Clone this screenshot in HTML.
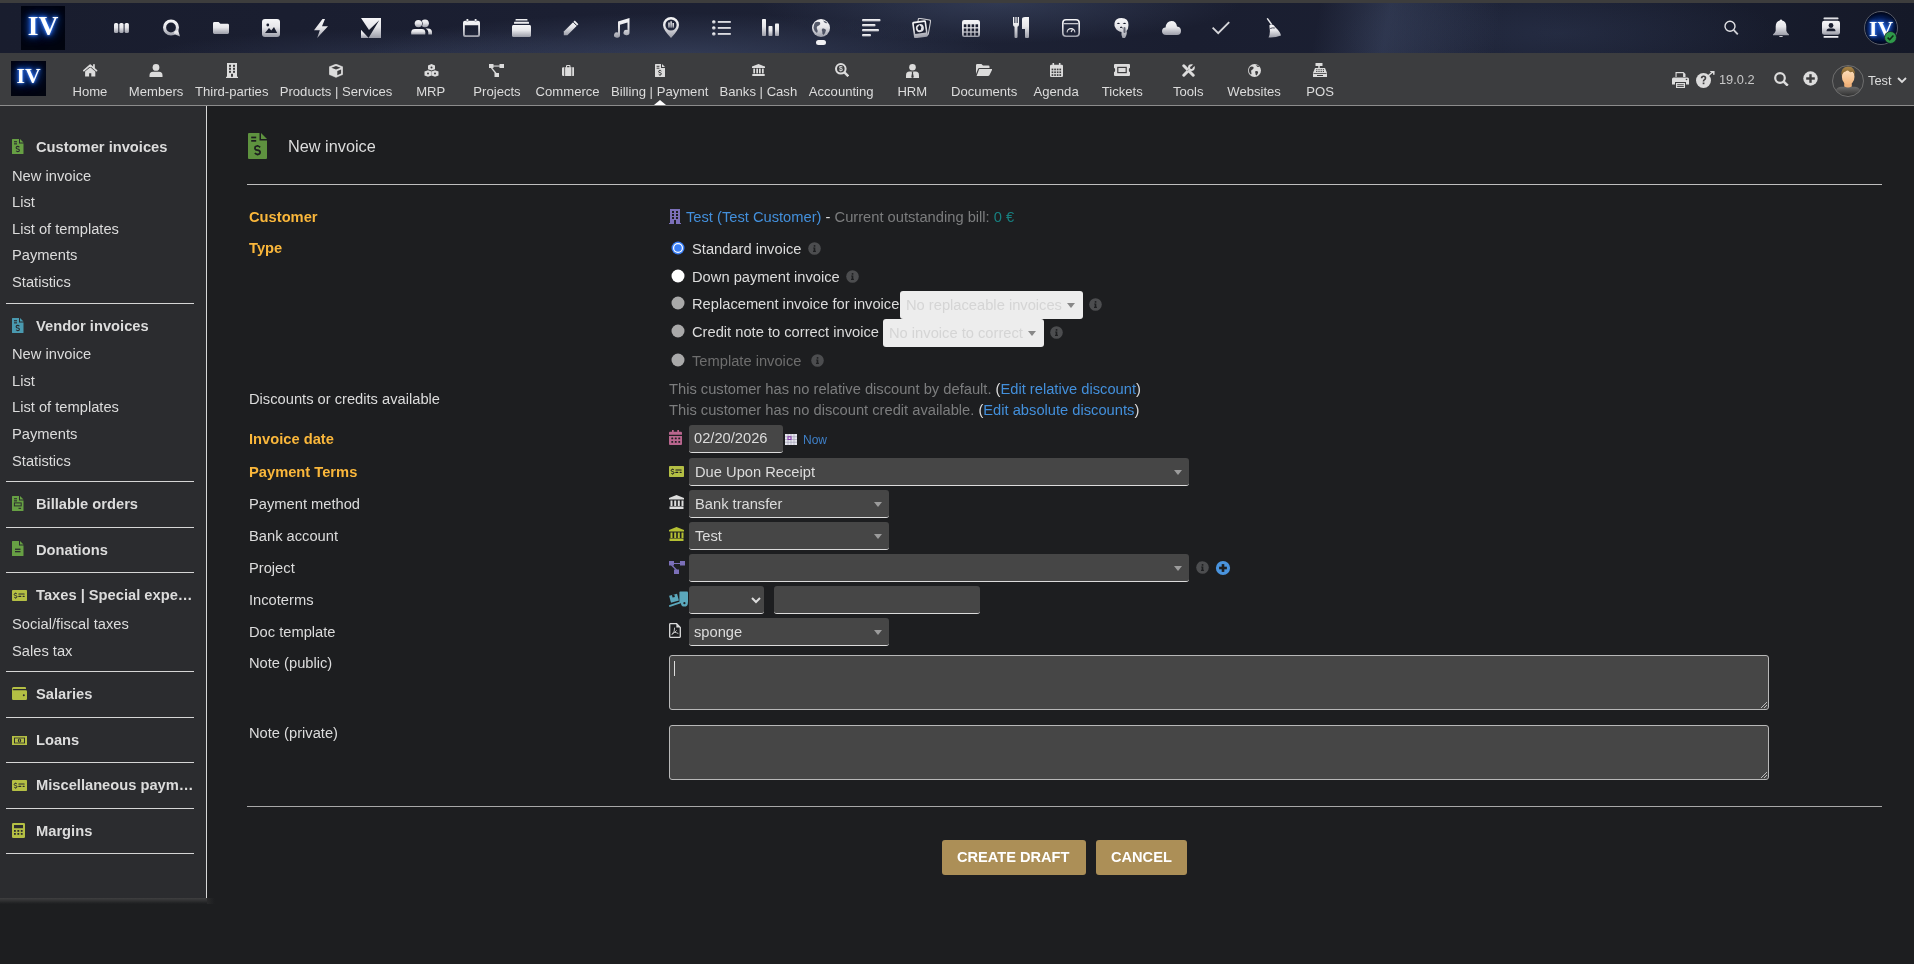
<!DOCTYPE html>
<html><head><meta charset="utf-8">
<style>
*{box-sizing:border-box;margin:0;padding:0}
html,body{width:1914px;height:964px;overflow:hidden}
body{background:#1d1e20;font-family:"Liberation Sans",sans-serif;color:#dcdcdc;font-size:14.7px;position:relative}
.a{position:absolute;white-space:nowrap}
#root{position:absolute;left:0;top:0;width:1914px;height:964px;will-change:transform}
#topbar{left:0;top:3px;width:1914px;height:50px;background:
radial-gradient(ellipse 320px 44px at 680px 54px, rgba(85,100,135,.42), rgba(85,100,135,0)),
radial-gradient(ellipse 260px 30px at 400px 56px, rgba(85,100,135,.25), rgba(85,100,135,0)),
radial-gradient(ellipse 240px 40px at 1000px 0px, rgba(85,100,135,.36), rgba(85,100,135,0)),
linear-gradient(100deg, rgba(0,0,0,0) 1300px, rgba(85,100,135,.32) 1370px, rgba(85,100,135,.18) 1420px, rgba(0,0,0,0) 1480px),
radial-gradient(ellipse 220px 50px at 1560px 30px, rgba(70,85,120,.22), rgba(70,85,120,0)),
linear-gradient(90deg, #191d2e 0, #1b1f32 30%, #1d2235 50%, #1a1e30 62%, #1b2033 80%, #151928 100%)}
</style></head><body>
<div id="root"><div class="a" style="left:0px;top:0px;width:1914px;height:3px;background:#3d3d3d"></div>
<div class="a" id="topbar"></div>
<div class="a" style="left:0px;top:53px;width:1914px;height:52px;background:#3c3d3f"></div>
<div class="a" style="left:0px;top:105px;width:1914px;height:1px;background:#8c8c8c"></div>
<div class="a" style="left:0px;top:106px;width:207px;height:792px;background:#2b2c2f"></div>
<div class="a" style="left:0px;top:898px;width:207px;height:6px;background:linear-gradient(rgba(78,78,78,.7),rgba(29,30,32,0))"></div>
<div class="a" style="left:207px;top:898px;width:8px;height:6px;background:linear-gradient(90deg,rgba(60,60,60,.4),rgba(29,30,32,0))"></div>
<div class="a" style="left:206px;top:106px;width:1px;height:792px;background:#d8d8d8"></div>
<svg class="a" width="0" height="0" style="left:0;top:0"><defs><linearGradient id="tg" x1="0" y1="0" x2="0" y2="1"><stop offset="0" stop-color="#f6f6f8"/><stop offset=".45" stop-color="#e6e6ea"/><stop offset="1" stop-color="#9b9da8"/></linearGradient><radialGradient id="glow" cx=".5" cy=".45" r=".5"><stop offset="0" stop-color="#1d5fd8"/><stop offset=".55" stop-color="#0b2a78"/><stop offset="1" stop-color="#020511"/></radialGradient></defs></svg>
<div class="a" style="left:21px;top:6px;width:44px;height:44px;background:#02050f;overflow:hidden"><div style="position:absolute;left:0;top:6px;width:44px;text-align:center;font-family:'Liberation Serif',serif;font-weight:bold;font-size:27.5px;line-height:27.5px;color:#fff;text-shadow:0 0 2px #4a90ff,0 0 4px #2f70f0,0 0 7px #2060e0,0 0 11px #1850c0,0 0 16px #0c3090">IV</div></div>
<svg class="a" style="left:114px;top:23px;" width="15" height="10" viewBox="0 0 15 10"><rect x="0" y="0" width="4.3" height="10" rx="1.6" fill="url(#tg)"/><rect x="5.3" y="0" width="4.3" height="10" rx="1.6" fill="url(#tg)"/><rect x="10.6" y="0" width="4.3" height="10" rx="1.6" fill="url(#tg)"/></svg>
<svg class="a" style="left:162px;top:19px;" width="19" height="18" viewBox="0 0 19 18"><path fill-rule="evenodd" d="M9 0.5A8 8 0 1 1 9 16.5A8 8 0 1 1 9 0.5ZM9 3.6A4.9 4.9 0 1 0 9 13.4A4.9 4.9 0 1 0 9 3.6Z" fill="url(#tg)"/><path d="M12.5 12.5L16 11L18 17.5L12 15Z" fill="url(#tg)"/></svg>
<svg class="a" style="left:213px;top:22px;" width="16" height="12" viewBox="0 0 16 12"><path d="M0 1.4Q0 0 1.4 0H5.6L7.4 1.8H14.6Q16 1.8 16 3.2V10.6Q16 12 14.6 12H1.4Q0 12 0 10.6Z" fill="url(#tg)"/></svg>
<svg class="a" style="left:262px;top:19px;" width="18" height="18" viewBox="0 0 18 18"><rect x="0" y="0" width="18" height="18" rx="3" fill="url(#tg)"/><circle cx="5.8" cy="6" r="1.4" fill="#191d2e"/><path d="M3 14L7 9L9.3 11.5L12 8L15.2 14Z" fill="#191d2e"/></svg>
<svg class="a" style="left:313px;top:19px;" width="16" height="19" viewBox="0 0 16 19"><path d="M9.5 0L1 11.2H6.8L4.2 19L15 7.2H9L12 0Z" fill="url(#tg)"/></svg>
<svg class="a" style="left:361px;top:18px;" width="20" height="20" viewBox="0 0 20 20"><path d="M0 0H20V20H0Z" fill="url(#tg)"/><path d="M0 0L8 12L18.2 2.2L7.5 20L0 12Z" fill="#191d2e"/><path d="M0 12L7.5 20H0Z" fill="url(#tg)"/></svg>
<svg class="a" style="left:411px;top:19px;" width="21" height="16" viewBox="0 0 21 16"><circle cx="14" cy="4.3" r="3.9" fill="url(#tg)"/><path d="M14.5 9.4H17Q21 9.4 21 13.3V15.6H17.3V13Q17.3 10.6 14.5 9.4Z" fill="url(#tg)"/><circle cx="7.4" cy="4.6" r="4.3" fill="#191d2e"/><circle cx="7.4" cy="4.6" r="3.7" fill="url(#tg)"/><path d="M0 15.6V13.3Q0 9.4 4 9.4H10.8Q14.8 9.4 14.8 13.3V15.6Z" fill="#191d2e"/><path d="M0.2 15.6V13.3Q0.2 9.9 4 9.9H10.8Q14.3 9.9 14.3 13.3V15.6Z" fill="url(#tg)"/></svg>
<svg class="a" style="left:463px;top:19px;" width="17" height="18" viewBox="0 0 17 18"><path fill-rule="evenodd" d="M2 1.8H15Q17 1.8 17 3.8V16Q17 18 15 18H2Q0 18 0 16V3.8Q0 1.8 2 1.8ZM1.8 6.2V15.2Q1.8 16.2 2.8 16.2H14.2Q15.2 16.2 15.2 15.2V6.2Z" fill="url(#tg)"/><rect x="3.5" y="0" width="1.8" height="3" fill="url(#tg)"/><rect x="11.7" y="0" width="1.8" height="3" fill="url(#tg)"/></svg>
<svg class="a" style="left:512px;top:19px;" width="19" height="18" viewBox="0 0 19 18"><rect x="3.5" y="0" width="12" height="1.8" rx=".6" fill="url(#tg)"/><rect x="2" y="2.8" width="15" height="2.2" rx=".6" fill="url(#tg)"/><path d="M1.2 6H17.8Q19 6 19 7.6V16.4Q19 18 17.4 18H1.6Q0 18 0 16.4V7.6Q0 6 1.2 6Z" fill="url(#tg)"/></svg>
<svg class="a" style="left:563px;top:20px;" width="16" height="16" viewBox="0 0 16 16"><path d="M11.8 0.6L15.4 4.2L4.4 15.2H0.8V11.6Z" fill="url(#tg)"/><path d="M10.3 2.1L13.9 5.7" stroke="#191d2e" stroke-width="1"/></svg>
<svg class="a" style="left:613px;top:18px;" width="17" height="20" viewBox="0 0 17 20"><path d="M5 3.5L16.5 0V14.5A3 2.6 0 1 1 14.5 12.1V4.6L7 6.8V17A3 2.6 0 1 1 5 14.6Z" fill="url(#tg)"/></svg>
<svg class="a" style="left:663px;top:17px;" width="16" height="21" viewBox="0 0 16 21"><path fill-rule="evenodd" d="M8 0A8 8 0 0 1 16 8Q16 12.6 8 21Q0 12.6 0 8A8 8 0 0 1 8 0ZM8 2.4A5.6 5.6 0 1 0 8 13.6A5.6 5.6 0 1 0 8 2.4Z" fill="url(#tg)"/><rect x="5.3" y="5.5" width="1.4" height="5.2" fill="url(#tg)"/><rect x="7.4" y="4.3" width="1.4" height="6.4" fill="url(#tg)"/><rect x="9.5" y="6" width="1.4" height="4.7" fill="url(#tg)"/></svg>
<svg class="a" style="left:712px;top:20px;" width="19" height="16" viewBox="0 0 19 16"><circle cx="1.8" cy="2" r="1.8" fill="url(#tg)"/><circle cx="1.8" cy="8" r="1.8" fill="url(#tg)"/><circle cx="1.8" cy="14" r="1.8" fill="url(#tg)"/><rect x="5.8" y="1.1" width="13" height="1.9" fill="url(#tg)"/><rect x="5.8" y="7.1" width="13" height="1.9" fill="url(#tg)"/><rect x="5.8" y="13.1" width="13" height="1.9" fill="url(#tg)"/></svg>
<svg class="a" style="left:762px;top:19px;" width="17" height="17" viewBox="0 0 17 17"><rect x="0" y="0" width="4" height="17" rx=".8" fill="url(#tg)"/><rect x="6.5" y="7" width="4" height="10" rx=".8" fill="url(#tg)"/><rect x="13" y="4.5" width="4" height="12.5" rx=".8" fill="url(#tg)"/></svg>
<svg class="a" style="left:812px;top:19px;" width="18" height="18" viewBox="0 0 18 18"><circle cx="9" cy="9" r="9" fill="url(#tg)"/><path d="M3 3.5Q6 2 8 3.2Q9 5 7 6.5Q4 7 5 10Q6.5 12 5 14Q2 12 1.5 9Q1.8 5.5 3 3.5ZM10.5 9.5Q13 9 14 11Q13.5 14 11.5 16Q10 15 10.3 12.8Q9 11 10.5 9.5ZM11 1.5Q14 2 15.5 4Q13.5 4.5 12.5 3.5Z" fill="#3a3f52" opacity=".85"/></svg>
<div class="a" style="left:816px;top:40px;width:10px;height:5px;background:#f2f2f4;border-radius:2.5px"></div>
<svg class="a" style="left:862px;top:19px;" width="19" height="18" viewBox="0 0 19 18"><rect x="0" y="0" width="18.5" height="2.6" rx="1" fill="url(#tg)"/><rect x="0" y="5" width="13.5" height="2.6" rx="1" fill="url(#tg)"/><rect x="0" y="10" width="17" height="2.6" rx="1" fill="url(#tg)"/><rect x="0" y="15" width="9" height="2.6" rx="1" fill="url(#tg)"/></svg>
<svg class="a" style="left:912px;top:18px;" width="19" height="20" viewBox="0 0 19 20"><g transform="rotate(10 11 9)"><rect x="4.5" y="0.5" width="13.5" height="16" rx="1.5" fill="#c8c8ce"/><rect x="5.6" y="1.6" width="11.3" height="13.8" rx="1" fill="#191d2e"/></g><g transform="rotate(-8 8 11)"><rect x="1" y="3" width="14" height="16.5" rx="1.5" fill="url(#tg)"/><rect x="2.6" y="4.8" width="10.8" height="10.6" fill="#191d2e"/><circle cx="8" cy="10.1" r="4" fill="#e4e4e8"/><path d="M8 6.9L9.6 9.3L8.6 12.2L6.2 12L5.6 9.3Z" fill="#191d2e"/></g></svg>
<svg class="a" style="left:962px;top:20px;" width="18" height="17" viewBox="0 0 18 17"><rect x="0" y="0" width="18" height="17" rx="2.2" fill="url(#tg)"/><rect x="1.8" y="4.3" width="2.6" height="2.9" fill="#191d2e"/><rect x="1.8" y="8.5" width="2.6" height="2.9" fill="#191d2e"/><rect x="1.8" y="12.7" width="2.6" height="2.9" fill="#191d2e"/><rect x="5.7" y="4.3" width="2.6" height="2.9" fill="#191d2e"/><rect x="5.7" y="8.5" width="2.6" height="2.9" fill="#191d2e"/><rect x="5.7" y="12.7" width="2.6" height="2.9" fill="#191d2e"/><rect x="9.6" y="4.3" width="2.6" height="2.9" fill="#191d2e"/><rect x="9.6" y="8.5" width="2.6" height="2.9" fill="#191d2e"/><rect x="9.6" y="12.7" width="2.6" height="2.9" fill="#191d2e"/><rect x="13.5" y="4.3" width="2.6" height="2.9" fill="#191d2e"/><rect x="13.5" y="8.5" width="2.6" height="2.9" fill="#191d2e"/><rect x="13.5" y="12.7" width="2.6" height="2.9" fill="#191d2e"/></svg>
<svg class="a" style="left:1013px;top:17px;" width="16" height="21" viewBox="0 0 16 21"><path d="M0 0H1.3V6H2.4V0H3.6V6H4.7V0H6V7.5Q6 9.5 4.5 9.8V20Q4.5 21 3.5 21H2.5Q1.5 21 1.5 20V9.8Q0 9.5 0 7.5Z" fill="url(#tg)"/><path d="M9 12V2Q9 0 12 0H16V20Q16 21 15 21H13Q12 21 12 20V12Z" fill="url(#tg)"/></svg>
<svg class="a" style="left:1062px;top:19px;" width="18" height="18" viewBox="0 0 18 18"><path fill-rule="evenodd" d="M4 0H14Q18 0 18 4V14Q18 18 14 18H4Q0 18 0 14V4Q0 0 4 0ZM4 1.6Q1.6 1.6 1.6 4V14Q1.6 16.4 4 16.4H14Q16.4 16.4 16.4 14V4Q16.4 1.6 14 1.6Z" fill="url(#tg)"/><rect x="1.6" y="4.2" width="14.8" height="1.2" fill="url(#tg)"/><path d="M4.5 13.5A4.5 4.5 0 0 1 13.5 13.5H12.2A3.2 3.2 0 0 0 5.8 13.5Z" fill="url(#tg)"/><path d="M9 13L10.6 10.4" stroke="#e6e6ea" stroke-width="1.2"/></svg>
<svg class="a" style="left:1114px;top:18px;" width="15" height="20" viewBox="0 0 15 20"><path d="M7.5 0Q14.5 0 14.5 7Q14.5 11 12.5 13Q13.5 16 11 20H8.5Q7 17 7.5 14Q3 13 1.5 10Q0 7.5 0.5 5Q1.5 0 7.5 0Z" fill="url(#tg)"/><path d="M2.8 5.2Q4.5 4 6.2 5.6Q4.5 6.7 2.8 5.2ZM8.6 5.6Q10.5 4 12.2 5.2Q10.5 6.7 8.6 5.6Z" fill="#191d2e"/><path d="M6 9.5Q7.5 8.5 8.5 10" stroke="#191d2e" stroke-width="1"/><rect x="9.5" y="9" width="2" height="6" rx="1" fill="#191d2e" opacity=".6"/></svg>
<svg class="a" style="left:1162px;top:21px;" width="19" height="14" viewBox="0 0 19 14"><path d="M4.2 14Q0 14 0 10.3Q0 6.8 3.6 6.5Q4.2 0 9.5 0Q14.4 0 15 5.6Q19 6 19 10Q19 14 15 14Z" fill="url(#tg)"/></svg>
<svg class="a" style="left:1212px;top:21px;" width="18" height="14" viewBox="0 0 18 14"><path d="M0.6 6.6L6.2 12.2L17.2 1.2" fill="none" stroke="#d6d6da" stroke-width="1.9"/></svg>
<svg class="a" style="left:1266px;top:18px;" width="15" height="20" viewBox="0 0 15 20"><path d="M1.2 0.3L5.6 6.5" stroke="#e8e8ec" stroke-width="1.4"/><path d="M3.4 7.2Q6 5.5 8 7.5L9.3 9.2Q14.5 14 15 17.5Q9 20 2.5 19.5Q4.5 16 3.6 10Z" fill="url(#tg)"/><path d="M4.2 10.5Q6.5 9.5 8.8 10" stroke="#191d2e" stroke-width=".8" fill="none"/></svg>
<svg class="a" style="left:1723px;top:20px;" width="16" height="16" viewBox="0 0 16 16"><circle cx="7" cy="6.3" r="5" fill="none" stroke="#e0e0e4" stroke-width="1.4"/><path d="M10.6 9.9L14.8 14.4" stroke="#d0d0d6" stroke-width="1.8"/></svg>
<svg class="a" style="left:1773px;top:19px;" width="16" height="18" viewBox="0 0 16 18"><path d="M8 0.5Q9 0.5 9.2 1.6Q13.3 2.6 13.3 7.5V11.8Q13.5 13.6 16 15.6V16.2H0V15.6Q2.5 13.6 2.7 11.8V7.5Q2.7 2.6 6.8 1.6Q7 0.5 8 0.5Z" fill="url(#tg)"/><path d="M6 16.9H10Q10 18 8 18Q6 18 6 16.9Z" fill="url(#tg)"/></svg>
<svg class="a" style="left:1822px;top:17px;" width="18" height="22" viewBox="0 0 18 22"><rect x="1.5" y="0.5" width="15" height="2" rx=".8" fill="url(#tg)"/><path d="M2.2 3.8H15.8Q18 3.8 18 6V15.6Q18 17.8 15.8 17.8H2.2Q0 17.8 0 15.6V6Q0 3.8 2.2 3.8Z" fill="url(#tg)"/><circle cx="9" cy="8.5" r="2.4" fill="#191d2e"/><path d="M4.5 14.2Q4.5 11.6 7 11.6H11Q13.5 11.6 13.5 14.2Z" fill="#191d2e"/><rect x="1.5" y="19" width="15" height="2" rx=".8" fill="url(#tg)"/></svg>
<div class="a" style="left:1864px;top:11px;width:34px;height:34px;border-radius:50%;background:radial-gradient(circle at 50% 50%,#0c2a70 0,#061540 45%,#020511 75%);border:1px solid #5a5e6a;overflow:hidden"><div style="position:absolute;left:0;top:6.5px;width:32px;text-align:center;font-family:'Liberation Serif',serif;font-weight:bold;font-size:21.5px;line-height:21.5px;color:#fff;text-shadow:0 0 2px #4a90ff,0 0 4px #2f70f0,0 0 7px #2060e0,0 0 11px #1850c0">IV</div></div>
<svg class="a" style="left:1884px;top:31px;" width="13" height="13" viewBox="0 0 13 13"><circle cx="6.5" cy="6.5" r="6" fill="#2f9a4a" stroke="#1a1e2e" stroke-width=".8"/><path d="M3.6 6.6L5.7 8.6L9.4 4.6" fill="none" stroke="#0e2a16" stroke-width="1.5"/></svg>
<div class="a" style="left:11px;top:61px;width:35px;height:35px;background:#02050f;overflow:hidden"><div style="position:absolute;left:0;top:5px;width:35px;text-align:center;font-family:'Liberation Serif',serif;font-weight:bold;font-size:21.6px;line-height:21.6px;color:#fff;text-shadow:0 0 2px #4a90ff,0 0 4px #2f70f0,0 0 7px #2060e0,0 0 11px #1850c0,0 0 16px #0c3090">IV</div></div>
<div class="a" style="left:-10.099999999999994px;top:82px;width:200px;text-align:center;font-size:13.1px;line-height:20px;">Home</div>
<div class="a" style="left:56.099999999999994px;top:82px;width:200px;text-align:center;font-size:13.1px;line-height:20px;">Members</div>
<div class="a" style="left:131.7px;top:82px;width:200px;text-align:center;font-size:13.1px;line-height:20px;">Third-parties</div>
<div class="a" style="left:236.0px;top:82px;width:200px;text-align:center;font-size:13.1px;line-height:20px;">Products | Services</div>
<div class="a" style="left:330.7px;top:82px;width:200px;text-align:center;font-size:13.1px;line-height:20px;">MRP</div>
<div class="a" style="left:397.0px;top:82px;width:200px;text-align:center;font-size:13.1px;line-height:20px;">Projects</div>
<div class="a" style="left:467.6px;top:82px;width:200px;text-align:center;font-size:13.1px;line-height:20px;">Commerce</div>
<div class="a" style="left:559.7px;top:82px;width:200px;text-align:center;font-size:13.1px;line-height:20px;">Billing | Payment</div>
<div class="a" style="left:658.4px;top:82px;width:200px;text-align:center;font-size:13.1px;line-height:20px;">Banks | Cash</div>
<div class="a" style="left:741.2px;top:82px;width:200px;text-align:center;font-size:13.1px;line-height:20px;">Accounting</div>
<div class="a" style="left:812.3px;top:82px;width:200px;text-align:center;font-size:13.1px;line-height:20px;">HRM</div>
<div class="a" style="left:884.2px;top:82px;width:200px;text-align:center;font-size:13.1px;line-height:20px;">Documents</div>
<div class="a" style="left:956.0999999999999px;top:82px;width:200px;text-align:center;font-size:13.1px;line-height:20px;">Agenda</div>
<div class="a" style="left:1022.3px;top:82px;width:200px;text-align:center;font-size:13.1px;line-height:20px;">Tickets</div>
<div class="a" style="left:1088.3px;top:82px;width:200px;text-align:center;font-size:13.1px;line-height:20px;">Tools</div>
<div class="a" style="left:1154.1px;top:82px;width:200px;text-align:center;font-size:13.1px;line-height:20px;">Websites</div>
<div class="a" style="left:1220.2px;top:82px;width:200px;text-align:center;font-size:13.1px;line-height:20px;">POS</div>
<svg class="a" style="left:83px;top:64px;" width="15" height="13" viewBox="0 0 15 13"><path d="M0.9 6.6L7.2 1.2L13.5 6.6" fill="none" stroke="#dcdcdc" stroke-width="1.7" stroke-linecap="round" stroke-linejoin="round"/><rect x="10.1" y="0.2" width="1.7" height="3.8" fill="#dcdcdc"/><path d="M2.1 7.4L7.2 3.2L12.3 7.4V12.4H8.3V9.3H6.1V12.4H2.1Z" fill="#dcdcdc"/></svg>
<svg class="a" style="left:149px;top:64px;" width="14" height="13" viewBox="0 0 14 13"><circle cx="7" cy="3.4" r="3.4" fill="#dcdcdc"/><path d="M0.5 13V11.4Q0.5 7.8 4 7.8H10Q13.5 7.8 13.5 11.4V13Z" fill="#dcdcdc"/></svg>
<svg class="a" style="left:226px;top:63px;" width="12" height="15" viewBox="0 0 12 15"><path d="M1 0H11V13.8H12V15H0V13.8H1Z" fill="#dcdcdc"/><rect x="3" y="1.8" width="2" height="2" fill="#3c3c3e"/><rect x="3" y="4.8" width="2" height="2" fill="#3c3c3e"/><rect x="3" y="7.8" width="2" height="2" fill="#3c3c3e"/><rect x="7" y="1.8" width="2" height="2" fill="#3c3c3e"/><rect x="7" y="4.8" width="2" height="2" fill="#3c3c3e"/><rect x="7" y="7.8" width="2" height="2" fill="#3c3c3e"/><rect x="5" y="10.8" width="2" height="3" fill="#3c3c3e"/></svg>
<svg class="a" style="left:329px;top:63.6px;" width="14" height="14" viewBox="0 0 14 14"><path d="M7 0L13.8 2.8V10.6L7 13.4L0.2 10.6V2.8Z" fill="#dcdcdc" stroke="#dcdcdc" stroke-width=".4" stroke-linejoin="round"/><path d="M7 2L11.6 3.7L7 5.4L2.4 3.7Z" fill="#3c3c3e"/><path d="M8.3 7.1L12.1 5.6V9.6L8.3 11.2Z" fill="#3c3c3e"/></svg>
<svg class="a" style="left:424px;top:64px;" width="15" height="13" viewBox="0 0 15 13"><path d="M7.5 0L11 1.4V5.2L7.5 6.6L4 5.2V1.4Z" fill="#dcdcdc"/><path d="M4 6.2L7.5 7.6V11.4L4 12.8L0.5 11.4V7.6Z" fill="#dcdcdc"/><path d="M11 6.2L14.5 7.6V11.4L11 12.8L7.5 11.4V7.6Z" fill="#dcdcdc"/><circle cx="7.5" cy="3.4" r="1" fill="#3c3c3e"/><circle cx="4" cy="9.6" r="1" fill="#3c3c3e"/><circle cx="11" cy="9.6" r="1" fill="#3c3c3e"/></svg>
<svg class="a" style="left:489px;top:64px;" width="15" height="13" viewBox="0 0 15 13"><rect x="0" y="0" width="4.5" height="4" fill="#dcdcdc"/><rect x="10.5" y="0" width="4.5" height="4" fill="#dcdcdc"/><rect x="5.5" y="9" width="4.5" height="4" fill="#dcdcdc"/><rect x="4" y="1.5" width="7" height="1.1" fill="#dcdcdc"/><path d="M2.5 3.8L7 9.5" stroke="#dcdcdc" stroke-width="1.3"/></svg>
<svg class="a" style="left:561.5px;top:65px;" width="12.5" height="11" viewBox="0 0 12.5 11"><path fill-rule="evenodd" d="M4 2.2V1Q4 0 5 0H7.5Q8.5 0 8.5 1V2.2H11.3Q12.5 2.2 12.5 3.4V9.8Q12.5 11 11.3 11H1.2Q0 11 0 9.8V3.4Q0 2.2 1.2 2.2ZM5.1 1.1V2.2H7.4V1.1Z" fill="#dcdcdc"/><rect x="2.3" y="2.2" width=".8" height="8.8" fill="#3c3c3e"/><rect x="9.4" y="2.2" width=".8" height="8.8" fill="#3c3c3e"/></svg>
<svg class="a" style="left:655px;top:64px;" width="10" height="13" viewBox="0 0 10 13"><path d="M0 .6Q0 0 .6 0H6V4H10V12.4Q10 13 9.4 13H.6Q0 13 0 12.4Z" fill="#dcdcdc"/><path d="M7 0L10 3H7Z" fill="#dcdcdc"/><rect x="1.6" y="1.8" width="2.8" height="1" fill="#3c3c3e"/><rect x="1.6" y="3.7" width="2.8" height="1" fill="#3c3c3e"/><path d="M6.40 7.19Q5.84 6.46 5.00 6.46Q3.60 6.46 3.60 7.64Q3.60 8.53 5.00 8.70Q6.40 8.87 6.40 9.76Q6.40 10.94 5.00 10.94Q4.16 10.94 3.60 10.21M5.00 5.90V6.57M5.00 10.83V11.50" fill="none" stroke="#3c3c3e" stroke-width="1.0"/></svg>
<svg class="a" style="left:752px;top:64px;" width="13" height="12" viewBox="0 0 13 12"><path d="M6.5 0L13 2.6V3.9H0V2.6Z" fill="#dcdcdc"/><rect x="1.3" y="4.6" width="1.7" height="4.8" fill="#dcdcdc"/><rect x="4.3" y="4.6" width="1.7" height="4.8" fill="#dcdcdc"/><rect x="7" y="4.6" width="1.7" height="4.8" fill="#dcdcdc"/><rect x="10" y="4.6" width="1.7" height="4.8" fill="#dcdcdc"/><rect x="0.3" y="10" width="12.4" height="2" fill="#dcdcdc"/></svg>
<svg class="a" style="left:835px;top:63px;" width="14" height="14" viewBox="0 0 14 14"><circle cx="5.8" cy="5.8" r="4.8" fill="none" stroke="#dcdcdc" stroke-width="2"/><path d="M9.2 9.2L13.3 13.3" stroke="#dcdcdc" stroke-width="2.4"/><text x="5.8" y="8.3" font-size="6.8" font-weight="bold" text-anchor="middle" fill="#dcdcdc" font-family="Liberation Sans">$</text></svg>
<svg class="a" style="left:906px;top:64px;" width="13" height="14" viewBox="0 0 13 14"><circle cx="6.5" cy="3.3" r="3.3" fill="#dcdcdc"/><path d="M0 14V11.2Q0 7.6 3.5 7.6H9.5Q13 7.6 13 11.2V14Z" fill="#dcdcdc"/><path d="M5.6 7.6H7.4L7 9L7.8 13.2L6.5 14L5.2 13.2L6 9Z" fill="#3c3c3e"/></svg>
<svg class="a" style="left:976px;top:64px;" width="16" height="12" viewBox="0 0 16 12"><path d="M0 1.2Q0 0 1.2 0H5.4L7 1.6H12.5Q13.5 1.6 13.5 2.8V4H3.4Q2.4 4 2 5L0 10Z" fill="#dcdcdc"/><path d="M3.2 5H15.6Q16.4 5 16 6L13.4 11.2Q13 12 12 12H0.6Z" fill="#dcdcdc"/></svg>
<svg class="a" style="left:1050px;top:63px;" width="13" height="14" viewBox="0 0 13 14"><path fill-rule="evenodd" d="M1.3 1.8H11.7Q13 1.8 13 3.1V12.7Q13 14 11.7 14H1.3Q0 14 0 12.7V3.1Q0 1.8 1.3 1.8Z" fill="#dcdcdc"/><rect x="2.5" y="0" width="1.6" height="3" fill="#dcdcdc"/><rect x="8.9" y="0" width="1.6" height="3" fill="#dcdcdc"/><rect x="1.6" y="5.6" width="1.7" height="1.7" fill="#3c3c3e"/><rect x="1.6" y="8.399999999999999" width="1.7" height="1.7" fill="#3c3c3e"/><rect x="1.6" y="11.2" width="1.7" height="1.7" fill="#3c3c3e"/><rect x="4.2" y="5.6" width="1.7" height="1.7" fill="#3c3c3e"/><rect x="4.2" y="8.399999999999999" width="1.7" height="1.7" fill="#3c3c3e"/><rect x="4.2" y="11.2" width="1.7" height="1.7" fill="#3c3c3e"/><rect x="6.800000000000001" y="5.6" width="1.7" height="1.7" fill="#3c3c3e"/><rect x="6.800000000000001" y="8.399999999999999" width="1.7" height="1.7" fill="#3c3c3e"/><rect x="6.800000000000001" y="11.2" width="1.7" height="1.7" fill="#3c3c3e"/><rect x="9.4" y="5.6" width="1.7" height="1.7" fill="#3c3c3e"/><rect x="9.4" y="8.399999999999999" width="1.7" height="1.7" fill="#3c3c3e"/><rect x="9.4" y="11.2" width="1.7" height="1.7" fill="#3c3c3e"/></svg>
<svg class="a" style="left:1114px;top:64px;" width="16" height="12" viewBox="0 0 16 12"><path d="M1 0H15Q16 0 16 1V3.8Q14.8 4.2 14.8 6Q14.8 7.8 16 8.2V11Q16 12 15 12H1Q0 12 0 11V8.2Q1.2 7.8 1.2 6Q1.2 4.2 0 3.8V1Q0 0 1 0Z" fill="#dcdcdc"/><rect x="3.2" y="2.8" width="9.6" height="6.4" fill="#3c3c3e"/><rect x="4.4" y="4" width="7.2" height="4" fill="#dcdcdc"/></svg>
<svg class="a" style="left:1182px;top:64px;" width="13" height="13" viewBox="0 0 13 13"><path d="M1.8 1.8L11.2 11.2" stroke="#dcdcdc" stroke-width="3" stroke-linecap="round"/><path d="M1.8 11.2L7.5 5.5" stroke="#dcdcdc" stroke-width="3" stroke-linecap="round"/><circle cx="9.4" cy="3.6" r="3.4" fill="#dcdcdc"/><path d="M9.3 3.7L12.6 0.4" stroke="#3c3c3e" stroke-width="2"/><circle cx="9.3" cy="3.7" r="1.2" fill="#3c3c3e"/><path d="M5.6 6.6L6.6 5.6" stroke="#3c3c3e" stroke-width=".7"/></svg>
<svg class="a" style="left:1248px;top:64px;" width="13" height="13" viewBox="0 0 13 13"><circle cx="6.5" cy="6.5" r="6.5" fill="#dcdcdc"/><path d="M2 3Q4 2 5.5 3Q6 4.5 4.5 5.5Q2.5 6 3.2 8Q4 9.5 3 10.8Q1 9 0.8 6.5Q1 4.5 2 3ZM7.5 7Q9.5 6.6 10.2 8Q9.8 10.2 8.5 11.6Q7.3 11 7.5 9.5Q6.8 8.2 7.5 7ZM8 1Q10.5 1.5 11.5 3Q10 3.3 9 2.5Z" fill="#3c3c3e"/></svg>
<svg class="a" style="left:1313px;top:63px;" width="14" height="14" viewBox="0 0 14 14"><rect x="2.5" y="0" width="7" height="3" fill="#dcdcdc"/><rect x="5.3" y="3" width="1.4" height="2" fill="#dcdcdc"/><path d="M2 5H12L14 10V14H0V10Z" fill="#dcdcdc"/><rect x="0.5" y="10.2" width="13" height="0.8" fill="#3c3c3e"/><rect x="3.2" y="6.2" width="1.2" height="1" fill="#3c3c3e"/><rect x="3.2" y="8.0" width="1.2" height="1" fill="#3c3c3e"/><rect x="5.4" y="6.2" width="1.2" height="1" fill="#3c3c3e"/><rect x="5.4" y="8.0" width="1.2" height="1" fill="#3c3c3e"/><rect x="7.6000000000000005" y="6.2" width="1.2" height="1" fill="#3c3c3e"/><rect x="7.6000000000000005" y="8.0" width="1.2" height="1" fill="#3c3c3e"/><rect x="9.8" y="6.2" width="1.2" height="1" fill="#3c3c3e"/><rect x="9.8" y="8.0" width="1.2" height="1" fill="#3c3c3e"/><rect x="4" y="12" width="6" height="1" fill="#3c3c3e"/></svg>
<svg class="a" style="left:654px;top:100px;" width="12" height="5" viewBox="0 0 12 5"><path d="M6 0L12 5H0Z" fill="#ffffff"/></svg>
<svg class="a" style="left:1672px;top:72px;" width="17" height="16" viewBox="0 0 17 16"><path d="M3.5 0H11.5L13.5 2V5H3.5Z" fill="#dcdcdc"/><path d="M1.5 5.5H15.5Q17 5.5 17 7V12.5H14V10H3V12.5H0V7Q0 5.5 1.5 5.5Z" fill="#dcdcdc"/><rect x="4" y="11" width="9" height="5" fill="#dcdcdc"/><rect x="5.2" y="12.3" width="6.6" height="0.9" fill="#3c3c3e"/><rect x="5.2" y="14" width="6.6" height="0.9" fill="#3c3c3e"/><rect x="4.6" y="1.2" width="6.5" height="3.8" fill="#3c3c3e"/><circle cx="14.5" cy="7.5" r=".8" fill="#3c3c3e"/></svg>
<svg class="a" style="left:1696px;top:71px;" width="19" height="17" viewBox="0 0 19 17"><circle cx="7.5" cy="9.5" r="7.5" fill="#dcdcdc"/><path d="M4.8 7.2Q4.8 4.5 7.6 4.5Q10.3 4.5 10.3 7Q10.3 8.6 8.6 9.4Q8.3 9.6 8.3 10.6H6.7Q6.7 8.8 7.8 8.2Q8.6 7.8 8.6 7Q8.6 6.1 7.6 6.1Q6.6 6.1 6.5 7.2Z" fill="#3c3c3e"/><rect x="6.7" y="11.5" width="1.7" height="1.7" fill="#3c3c3e"/><path d="M12 5L17.5 0.2M14.2 0.2H17.8V3.8" stroke="#dcdcdc" stroke-width="1.5" fill="none"/></svg>
<div class="a" style="left:1719px;top:70px;font-size:12.8px;line-height:20px;color:#c8c8c8;">19.0.2</div>
<svg class="a" style="left:1774px;top:72px;" width="16" height="14" viewBox="0 0 16 14"><circle cx="6" cy="6" r="4.8" fill="none" stroke="#dcdcdc" stroke-width="2.2"/><path d="M9.4 9.4L13.8 13.6" stroke="#dcdcdc" stroke-width="2.6"/></svg>
<svg class="a" style="left:1803px;top:71px;" width="15" height="15" viewBox="0 0 15 15"><circle cx="7.5" cy="7.5" r="7.2" fill="#dcdcdc"/><rect x="6.3" y="3.2" width="2.4" height="8.6" fill="#3c3c3e"/><rect x="3.2" y="6.3" width="8.6" height="2.4" fill="#3c3c3e"/></svg>
<svg class="a" style="left:1832px;top:65px" width="32" height="32" viewBox="0 0 32 32"><defs><clipPath id="avc"><circle cx="16" cy="16" r="15.5"/></clipPath><linearGradient id="avsh" x1="0" y1="0" x2="0" y2="1"><stop offset="0" stop-color="#6a6a6a"/><stop offset="1" stop-color="#2a2a2a"/></linearGradient><linearGradient id="avsk" x1="0" y1="0" x2="0" y2="1"><stop offset="0" stop-color="#fde0c0"/><stop offset="1" stop-color="#f4b57a"/></linearGradient><linearGradient id="avh" x1="0" y1="0" x2="0" y2="1"><stop offset="0" stop-color="#a88548"/><stop offset="1" stop-color="#7a5a2a"/></linearGradient></defs><g clip-path="url(#avc)"><path d="M3.5 32V26.5Q4 22.5 9 21.8H23Q28 22.5 28.5 26.5V32Z" fill="url(#avsh)"/><path d="M12.2 16H19.8V21.6Q16 23.6 12.2 21.6Z" fill="#eeb07a"/><ellipse cx="16.2" cy="11.8" rx="6.3" ry="7.8" fill="url(#avsk)"/><path d="M9.2 11.5Q8.6 1.4 16 1.4Q23.6 1.4 23 11Q22.2 7.2 20.5 6.8Q18 8 17 6.2Q15.5 4.8 13.6 6.5Q10.6 6.8 9.2 11.5Z" fill="url(#avh)"/></g><circle cx="16" cy="16" r="15.5" fill="none" stroke="#6e6e6e" stroke-width="1"/></svg>
<div class="a" style="left:1868px;top:71px;font-size:12.8px;line-height:20px;">Test</div>
<svg class="a" style="left:1897px;top:77px;" width="10" height="7" viewBox="0 0 10 7"><path d="M1 1L5 5L9 1" fill="none" stroke="#dcdcdc" stroke-width="1.8"/></svg>
<svg class="a" style="left:12px;top:139px;" width="12" height="15" viewBox="0 0 12 15"><path d="M0 0.6Q0 0 .6 0H7V4.6H11.5V14.4Q11.5 15 10.9 15H.6Q0 15 0 14.4Z" fill="#67a044"/><path d="M8 0L11.5 3.6H8Z" fill="#67a044"/><rect x="2" y="2.2" width="3" height="1.1" fill="#2b2c2f"/><rect x="2" y="4.3" width="3" height="1.1" fill="#2b2c2f"/><path d="M7.40 8.22Q6.74 7.36 5.75 7.36Q4.10 7.36 4.10 8.75Q4.10 9.80 5.75 10.00Q7.40 10.20 7.40 11.25Q7.40 12.64 5.75 12.64Q4.76 12.64 4.10 11.78M5.75 6.70V7.49M5.75 12.51V13.30" fill="none" stroke="#2b2c2f" stroke-width="1.1"/></svg>
<div class="a" style="left:36px;top:137px;font-size:14.7px;line-height:20px;font-weight:bold;">Customer invoices</div>
<div class="a" style="left:12px;top:166px;font-size:14.7px;line-height:20px;">New invoice</div>
<div class="a" style="left:12px;top:192px;font-size:14.7px;line-height:20px;">List</div>
<div class="a" style="left:12px;top:219px;font-size:14.7px;line-height:20px;">List of templates</div>
<div class="a" style="left:12px;top:245px;font-size:14.7px;line-height:20px;">Payments</div>
<div class="a" style="left:12px;top:272px;font-size:14.7px;line-height:20px;">Statistics</div>
<div class="a" style="left:6px;top:303px;width:188px;height:1px;background:#d6d6d6"></div>
<svg class="a" style="left:12px;top:318px;" width="12" height="15" viewBox="0 0 12 15"><path d="M0 0.6Q0 0 .6 0H7V4.6H11.5V14.4Q11.5 15 10.9 15H.6Q0 15 0 14.4Z" fill="#4a9ab0"/><path d="M8 0L11.5 3.6H8Z" fill="#4a9ab0"/><rect x="2" y="2.2" width="3" height="1.1" fill="#2b2c2f"/><rect x="2" y="4.3" width="3" height="1.1" fill="#2b2c2f"/><path d="M7.40 8.22Q6.74 7.36 5.75 7.36Q4.10 7.36 4.10 8.75Q4.10 9.80 5.75 10.00Q7.40 10.20 7.40 11.25Q7.40 12.64 5.75 12.64Q4.76 12.64 4.10 11.78M5.75 6.70V7.49M5.75 12.51V13.30" fill="none" stroke="#2b2c2f" stroke-width="1.1"/></svg>
<div class="a" style="left:36px;top:316px;font-size:14.7px;line-height:20px;font-weight:bold;">Vendor invoices</div>
<div class="a" style="left:12px;top:344px;font-size:14.7px;line-height:20px;">New invoice</div>
<div class="a" style="left:12px;top:371px;font-size:14.7px;line-height:20px;">List</div>
<div class="a" style="left:12px;top:397px;font-size:14.7px;line-height:20px;">List of templates</div>
<div class="a" style="left:12px;top:424px;font-size:14.7px;line-height:20px;">Payments</div>
<div class="a" style="left:12px;top:451px;font-size:14.7px;line-height:20px;">Statistics</div>
<div class="a" style="left:6px;top:481px;width:188px;height:1px;background:#d6d6d6"></div>
<svg class="a" style="left:12px;top:496px;" width="12" height="15" viewBox="0 0 12 15"><path d="M0 0.6Q0 0 .6 0H7V4.6H11.5V14.4Q11.5 15 10.9 15H.6Q0 15 0 14.4Z" fill="#67a044"/><path d="M8 0L11.5 3.6H8Z" fill="#67a044"/><rect x="2" y="2.2" width="3" height="1.1" fill="#2b2c2f"/><rect x="2" y="4.3" width="3" height="1.1" fill="#2b2c2f"/><rect x="2.4" y="6.9" width="6.8" height="3" fill="none" stroke="#2b2c2f" stroke-width="1"/><rect x="6.5" y="11.8" width="2.6" height="1.1" fill="#2b2c2f"/></svg>
<div class="a" style="left:36px;top:494px;font-size:14.7px;line-height:20px;font-weight:bold;">Billable orders</div>
<div class="a" style="left:6px;top:527px;width:188px;height:1px;background:#d6d6d6"></div>
<svg class="a" style="left:12px;top:541px;" width="12" height="15" viewBox="0 0 12 15"><path d="M0 0.6Q0 0 .6 0H7V4.6H11.5V14.4Q11.5 15 10.9 15H.6Q0 15 0 14.4Z" fill="#67a044"/><path d="M8 0L11.5 3.6H8Z" fill="#67a044"/><rect x="3" y="7.6" width="5.5" height="1.3" fill="#2b2c2f"/><rect x="3" y="10" width="5.5" height="1.3" fill="#2b2c2f"/></svg>
<div class="a" style="left:36px;top:540px;font-size:14.7px;line-height:20px;font-weight:bold;">Donations</div>
<div class="a" style="left:6px;top:572px;width:188px;height:1px;background:#d6d6d6"></div>
<svg class="a" style="left:12px;top:590px;" width="15" height="11" viewBox="0 0 15 11"><rect x="0" y="0" width="15" height="11" rx=".8" fill="#b4bf44"/><path d="M5.00 4.09Q4.44 3.36 3.60 3.36Q2.20 3.36 2.20 4.54Q2.20 5.43 3.60 5.60Q5.00 5.77 5.00 6.66Q5.00 7.84 3.60 7.84Q2.76 7.84 2.20 7.11M3.60 2.80V3.47M3.60 7.73V8.40" fill="none" stroke="#2b2c2f" stroke-width="1.0"/><rect x="6.3" y="3.4" width="6.4" height="1.2" rx=".5" fill="#2b2c2f"/><rect x="6.3" y="5.8" width="3" height="1.2" rx=".5" fill="#2b2c2f"/><rect x="10.6" y="5.8" width="2.1" height="1.2" rx=".5" fill="#2b2c2f"/></svg>
<div class="a" style="left:36px;top:585px;width:158px;overflow:hidden;text-overflow:ellipsis;font-weight:bold;line-height:20px">Taxes | Special expenses</div>
<div class="a" style="left:12px;top:614px;font-size:14.7px;line-height:20px;">Social/fiscal taxes</div>
<div class="a" style="left:12px;top:641px;font-size:14.7px;line-height:20px;">Sales tax</div>
<div class="a" style="left:6px;top:671px;width:188px;height:1px;background:#d6d6d6"></div>
<svg class="a" style="left:12px;top:687px;" width="15" height="13" viewBox="0 15 13"><path d="M1.5 0H13Q14 0 14 1V2H1.5Q.7 2 .7 2.7Q.7 3.2 1.5 3.2H13.8Q15 3.2 15 4.4V11.8Q15 13 13.8 13H1.2Q0 13 0 11.8V1.5Q0 0 1.5 0Z" fill="#b4bf44"/><circle cx="11.8" cy="8.2" r="1" fill="#2b2c2f"/></svg>
<div class="a" style="left:36px;top:684px;font-size:14.7px;line-height:20px;font-weight:bold;">Salaries</div>
<div class="a" style="left:6px;top:717px;width:188px;height:1px;background:#d6d6d6"></div>
<svg class="a" style="left:12px;top:736px;" width="15" height="9" viewBox="0 15 9"><rect x="0" y="0" width="15" height="9" fill="#b4bf44"/><rect x="2" y="1.6" width="11" height="5.8" fill="#2b2c2f"/><rect x="3" y="2.4" width="9" height="4.2" fill="#b4bf44"/><ellipse cx="7.5" cy="4.5" rx="1.6" ry="2" fill="#2b2c2f"/><rect x="7.1" y="3.3" width=".8" height="2.4" fill="#b4bf44"/></svg>
<div class="a" style="left:36px;top:730px;font-size:14.7px;line-height:20px;font-weight:bold;">Loans</div>
<div class="a" style="left:6px;top:762px;width:188px;height:1px;background:#d6d6d6"></div>
<svg class="a" style="left:12px;top:780px;" width="15" height="11" viewBox="0 0 15 11"><rect x="0" y="0" width="15" height="11" rx=".8" fill="#b4bf44"/><path d="M5.00 4.09Q4.44 3.36 3.60 3.36Q2.20 3.36 2.20 4.54Q2.20 5.43 3.60 5.60Q5.00 5.77 5.00 6.66Q5.00 7.84 3.60 7.84Q2.76 7.84 2.20 7.11M3.60 2.80V3.47M3.60 7.73V8.40" fill="none" stroke="#2b2c2f" stroke-width="1.0"/><rect x="6.3" y="3.4" width="6.4" height="1.2" rx=".5" fill="#2b2c2f"/><rect x="6.3" y="5.8" width="3" height="1.2" rx=".5" fill="#2b2c2f"/><rect x="10.6" y="5.8" width="2.1" height="1.2" rx=".5" fill="#2b2c2f"/></svg>
<div class="a" style="left:36px;top:775px;width:158px;overflow:hidden;text-overflow:ellipsis;font-weight:bold;line-height:20px">Miscellaneous payments</div>
<div class="a" style="left:6px;top:808px;width:188px;height:1px;background:#d6d6d6"></div>
<svg class="a" style="left:12px;top:823px;" width="13" height="15" viewBox="0 13 15"><rect x="0" y="0" width="13" height="15" rx="1.3" fill="#b4bf44"/><rect x="2" y="2" width="9" height="3.2" fill="#2b2c2f"/><rect x="2.0" y="7" width="1.8" height="1.8" fill="#2b2c2f"/><rect x="2.0" y="10" width="1.8" height="1.8" fill="#2b2c2f"/><rect x="5.4" y="7" width="1.8" height="1.8" fill="#2b2c2f"/><rect x="5.4" y="10" width="1.8" height="1.8" fill="#2b2c2f"/><rect x="8.8" y="7" width="1.8" height="1.8" fill="#2b2c2f"/><rect x="8.8" y="10" width="1.8" height="1.8" fill="#2b2c2f"/></svg>
<div class="a" style="left:36px;top:821px;font-size:14.7px;line-height:20px;font-weight:bold;">Margins</div>
<div class="a" style="left:6px;top:853px;width:188px;height:1px;background:#d6d6d6"></div>
<svg class="a" style="left:248px;top:133px;" width="19" height="26" viewBox="0 0 19 26"><path d="M0 1Q0 0 1 0H11.5V7.5H19V25Q19 26 18 26H1Q0 26 0 25Z" fill="#5e923f"/><path d="M13 0L19 6H13Z" fill="#5e923f"/><rect x="3.2" y="3.6" width="5" height="1.7" fill="#1d1e20"/><rect x="3.2" y="7" width="5" height="1.7" fill="#1d1e20"/><path d="M12.12 14.36Q11.07 13.00 9.50 13.00Q6.88 13.00 6.88 15.20Q6.88 16.88 9.50 17.20Q12.12 17.52 12.12 19.20Q12.12 21.40 9.50 21.40Q7.92 21.40 6.88 20.04M9.50 11.95V13.21M9.50 21.19V22.45" fill="none" stroke="#1d1e20" stroke-width="1.7"/></svg>
<div class="a" style="left:288px;top:136px;font-size:16.3px;line-height:20px;">New invoice</div>
<div class="a" style="left:247px;top:184px;width:1635px;height:1px;background:#bebebe"></div>
<div class="a" style="left:249px;top:207px;font-size:14.7px;line-height:20px;font-weight:bold;color:#fab73b;">Customer</div>
<div class="a" style="left:249px;top:238px;font-size:14.7px;line-height:20px;font-weight:bold;color:#fab73b;">Type</div>
<div class="a" style="left:249px;top:389px;font-size:14.7px;line-height:20px;">Discounts or credits available</div>
<div class="a" style="left:249px;top:429px;font-size:14.7px;line-height:20px;font-weight:bold;color:#fab73b;">Invoice date</div>
<div class="a" style="left:249px;top:462px;font-size:14.7px;line-height:20px;font-weight:bold;color:#fab73b;">Payment Terms</div>
<div class="a" style="left:249px;top:494px;font-size:14.7px;line-height:20px;">Payment method</div>
<div class="a" style="left:249px;top:526px;font-size:14.7px;line-height:20px;">Bank account</div>
<div class="a" style="left:249px;top:558px;font-size:14.7px;line-height:20px;">Project</div>
<div class="a" style="left:249px;top:590px;font-size:14.7px;line-height:20px;">Incoterms</div>
<div class="a" style="left:249px;top:622px;font-size:14.7px;line-height:20px;">Doc template</div>
<div class="a" style="left:249px;top:653px;font-size:14.7px;line-height:20px;">Note (public)</div>
<div class="a" style="left:249px;top:723px;font-size:14.7px;line-height:20px;">Note (private)</div>
<svg class="a" style="left:669px;top:209px;" width="12" height="15" viewBox="0 12 15"><path d="M1 0H11V14H12V15H0V14H1Z" fill="#7b6fb8"/><rect x="3" y="2" width="2" height="2" fill="#1d1e20"/><rect x="3" y="5" width="2" height="2" fill="#1d1e20"/><rect x="3" y="8" width="2" height="2" fill="#1d1e20"/><rect x="7" y="2" width="2" height="2" fill="#1d1e20"/><rect x="7" y="5" width="2" height="2" fill="#1d1e20"/><rect x="7" y="8" width="2" height="2" fill="#1d1e20"/><rect x="5" y="11" width="2" height="4" fill="#1d1e20"/></svg>
<div class="a" style="left:686px;top:207px;line-height:20px"><span style="color:#4390dc">Test (Test Customer)</span> - <span style="color:#7c7d7e">Current outstanding bill: </span><span style="color:#178080">0 €</span></div>
<svg class="a" style="left:671px;top:241px;" width="14" height="14" viewBox="0 14 14"><circle cx="7" cy="7" r="6.5" fill="#3a7ff6"/><circle cx="7" cy="7" r="5" fill="#fff"/><circle cx="7" cy="7" r="3.8" fill="#3a7ff6"/></svg>
<div class="a" style="left:692px;top:239px;font-size:14.7px;line-height:20px;">Standard invoice</div>
<svg class="a" style="left:807.5px;top:241.5px;" width="13" height="13" viewBox="0 13 13"><circle cx="6.5" cy="6.5" r="6.3" fill="#4c4d4f"/><rect x="5.75" y="3.1" width="1.6" height="1.6" fill="#1d1e20"/><path d="M5.2 5.6H7.3V8.8H7.9V9.9H5V8.8H5.7V6.6H5.2Z" fill="#1d1e20"/></svg>
<svg class="a" style="left:671px;top:269px;" width="14" height="14" viewBox="0 14 14"><circle cx="7" cy="7" r="6.5" fill="#ffffff"/></svg>
<div class="a" style="left:692px;top:267px;font-size:14.7px;line-height:20px;">Down payment invoice</div>
<svg class="a" style="left:846.0px;top:269.5px;" width="13" height="13" viewBox="0 13 13"><circle cx="6.5" cy="6.5" r="6.3" fill="#4c4d4f"/><rect x="5.75" y="3.1" width="1.6" height="1.6" fill="#1d1e20"/><path d="M5.2 5.6H7.3V8.8H7.9V9.9H5V8.8H5.7V6.6H5.2Z" fill="#1d1e20"/></svg>
<svg class="a" style="left:671px;top:296px;" width="14" height="14" viewBox="0 14 14"><circle cx="7" cy="7" r="6.5" fill="#a9a9a9"/></svg>
<div class="a" style="left:692px;top:294px;font-size:14.7px;line-height:20px;">Replacement invoice for invoice</div>
<svg class="a" style="left:671px;top:324px;" width="14" height="14" viewBox="0 14 14"><circle cx="7" cy="7" r="6.5" fill="#a9a9a9"/></svg>
<div class="a" style="left:692px;top:322px;font-size:14.7px;line-height:20px;">Credit note to correct invoice</div>
<svg class="a" style="left:671px;top:353px;" width="14" height="14" viewBox="0 14 14"><circle cx="7" cy="7" r="6.5" fill="#a9a9a9"/></svg>
<div class="a" style="left:692px;top:351px;font-size:14.7px;line-height:20px;color:#6e6e6e;">Template invoice</div>
<svg class="a" style="left:811.2px;top:353.5px;" width="13" height="13" viewBox="0 13 13"><circle cx="6.5" cy="6.5" r="6.3" fill="#4c4d4f"/><rect x="5.75" y="3.1" width="1.6" height="1.6" fill="#1d1e20"/><path d="M5.2 5.6H7.3V8.8H7.9V9.9H5V8.8H5.7V6.6H5.2Z" fill="#1d1e20"/></svg>
<div class="a" style="left:900px;top:291px;width:183px;height:28px;background:#ededed;border-radius:3px"></div>
<div class="a" style="left:906px;top:295px;font-size:14.7px;line-height:20px;color:#d5d5d5;">No replaceable invoices</div>
<svg class="a" style="left:1067px;top:303.0px;" width="8" height="5" viewBox="0 8 5"><path d="M0 0H8L4 5Z" fill="#888"/></svg>
<svg class="a" style="left:1088.9px;top:297.5px;" width="13" height="13" viewBox="0 13 13"><circle cx="6.5" cy="6.5" r="6.3" fill="#4c4d4f"/><rect x="5.75" y="3.1" width="1.6" height="1.6" fill="#1d1e20"/><path d="M5.2 5.6H7.3V8.8H7.9V9.9H5V8.8H5.7V6.6H5.2Z" fill="#1d1e20"/></svg>
<div class="a" style="left:883px;top:319px;width:161px;height:28px;background:#ededed;border-radius:3px"></div>
<div class="a" style="left:889px;top:323px;font-size:14.7px;line-height:20px;color:#d5d5d5;">No invoice to correct</div>
<svg class="a" style="left:1028px;top:331.0px;" width="8" height="5" viewBox="0 8 5"><path d="M0 0H8L4 5Z" fill="#888"/></svg>
<svg class="a" style="left:1050.2px;top:325.5px;" width="13" height="13" viewBox="0 13 13"><circle cx="6.5" cy="6.5" r="6.3" fill="#4c4d4f"/><rect x="5.75" y="3.1" width="1.6" height="1.6" fill="#1d1e20"/><path d="M5.2 5.6H7.3V8.8H7.9V9.9H5V8.8H5.7V6.6H5.2Z" fill="#1d1e20"/></svg>
<div class="a" style="left:669px;top:379px;line-height:20px"><span style="color:#7c7d7e">This customer has no relative discount by default.</span> (<span style="color:#4390dc">Edit relative discount</span>)</div>
<div class="a" style="left:669px;top:400px;line-height:20px"><span style="color:#7c7d7e">This customer has no discount credit available.</span> (<span style="color:#4390dc">Edit absolute discounts</span>)</div>
<svg class="a" style="left:669px;top:430px;" width="13" height="15" viewBox="0 0 13 15"><rect x="3" y="0" width="1.7" height="2.6" fill="#b8668e"/><rect x="8.3" y="0" width="1.7" height="2.6" fill="#b8668e"/><path d="M1 1.8H12Q13 1.8 13 2.8V4.8H0V2.8Q0 1.8 1 1.8Z" fill="#b8668e"/><path d="M0 5.9H13V14Q13 15 12 15H1Q0 15 0 14Z" fill="#b8668e"/><rect x="2.3" y="7.6" width="1.9" height="1.7" rx=".5" fill="#1d1e20"/><rect x="2.3" y="11.1" width="1.9" height="1.7" rx=".5" fill="#1d1e20"/><rect x="5.8" y="7.6" width="1.9" height="1.7" rx=".5" fill="#1d1e20"/><rect x="5.8" y="11.1" width="1.9" height="1.7" rx=".5" fill="#1d1e20"/><rect x="9.3" y="7.6" width="1.9" height="1.7" rx=".5" fill="#1d1e20"/><rect x="9.3" y="11.1" width="1.9" height="1.7" rx=".5" fill="#1d1e20"/></svg>
<div class="a" style="left:689px;top:425px;width:94px;height:28px;background:#464646;border-radius:3px;border-bottom:1px solid #dcdcdc"></div>
<div class="a" style="left:694px;top:428px;font-size:14.7px;line-height:20px;">02/20/2026</div>
<svg class="a" style="left:785px;top:434px;" width="12" height="11" viewBox="0 12 11"><rect x="0" y="0" width="12" height="11" fill="#e6e6ee"/><line x1="3" y1="0" x2="3" y2="11" stroke="#9a9ab0" stroke-width=".6"/><line x1="6" y1="0" x2="6" y2="11" stroke="#9a9ab0" stroke-width=".6"/><line x1="9" y1="0" x2="9" y2="11" stroke="#9a9ab0" stroke-width=".6"/><line x1="0" y1="2.75" x2="12" y2="2.75" stroke="#9a9ab0" stroke-width=".6"/><line x1="0" y1="5.5" x2="12" y2="5.5" stroke="#9a9ab0" stroke-width=".6"/><line x1="0" y1="8.25" x2="12" y2="8.25" stroke="#9a9ab0" stroke-width=".6"/><rect x="3" y="2.75" width="3" height="2.75" fill="none" stroke="#8a3ab0" stroke-width="1"/></svg>
<div class="a" style="left:803px;top:430px;font-size:12px;line-height:20px;color:#3f80c8;">Now</div>
<svg class="a" style="left:669px;top:466px;" width="15" height="11" viewBox="0 0 15 11"><rect x="0" y="0" width="15" height="11" rx=".8" fill="#b4bf44"/><path d="M5.00 4.09Q4.44 3.36 3.60 3.36Q2.20 3.36 2.20 4.54Q2.20 5.43 3.60 5.60Q5.00 5.77 5.00 6.66Q5.00 7.84 3.60 7.84Q2.76 7.84 2.20 7.11M3.60 2.80V3.47M3.60 7.73V8.40" fill="none" stroke="#1d1e20" stroke-width="1.0"/><rect x="6.3" y="3.4" width="6.4" height="1.2" rx=".5" fill="#1d1e20"/><rect x="6.3" y="5.8" width="3" height="1.2" rx=".5" fill="#1d1e20"/><rect x="10.6" y="5.8" width="2.1" height="1.2" rx=".5" fill="#1d1e20"/></svg>
<div class="a" style="left:689px;top:458px;width:500px;height:28px;background:#464646;border-radius:3px;border-bottom:1px solid #dcdcdc"></div>
<div class="a" style="left:695px;top:462px;font-size:14.7px;line-height:20px;">Due Upon Receipt</div>
<svg class="a" style="left:1173.5px;top:469.5px;" width="8" height="5" viewBox="0 8 5"><path d="M0 0H8L4 5Z" fill="#9c9c9c"/></svg>
<svg class="a" style="left:669px;top:495px;" width="15" height="14" viewBox="0 15 14"><path d="M7.5 0L15 3V4.5H0V3Z" fill="#dcdcdc"/><rect x="1.5" y="5.5" width="2" height="5.5" fill="#dcdcdc"/><rect x="5.2" y="5.5" width="2" height="5.5" fill="#dcdcdc"/><rect x="8.8" y="5.5" width="2" height="5.5" fill="#dcdcdc"/><rect x="12.5" y="5.5" width="2" height="5.5" fill="#dcdcdc"/><rect x="0.5" y="11.5" width="14" height="2.5" fill="#dcdcdc"/></svg>
<div class="a" style="left:689px;top:490px;width:200px;height:28px;background:#464646;border-radius:3px;border-bottom:1px solid #dcdcdc"></div>
<div class="a" style="left:695px;top:494px;font-size:14.7px;line-height:20px;">Bank transfer</div>
<svg class="a" style="left:873.5px;top:501.5px;" width="8" height="5" viewBox="0 8 5"><path d="M0 0H8L4 5Z" fill="#9c9c9c"/></svg>
<svg class="a" style="left:669px;top:527px;" width="15" height="14" viewBox="0 15 14"><path d="M7.5 0L15 3V4.5H0V3Z" fill="#b5c033"/><rect x="1.5" y="5.5" width="2" height="5.5" fill="#b5c033"/><rect x="5.2" y="5.5" width="2" height="5.5" fill="#b5c033"/><rect x="8.8" y="5.5" width="2" height="5.5" fill="#b5c033"/><rect x="12.5" y="5.5" width="2" height="5.5" fill="#b5c033"/><rect x="0.5" y="11.5" width="14" height="2.5" fill="#b5c033"/></svg>
<div class="a" style="left:689px;top:522px;width:200px;height:28px;background:#464646;border-radius:3px;border-bottom:1px solid #dcdcdc"></div>
<div class="a" style="left:695px;top:526px;font-size:14.7px;line-height:20px;">Test</div>
<svg class="a" style="left:873.5px;top:533.5px;" width="8" height="5" viewBox="0 8 5"><path d="M0 0H8L4 5Z" fill="#9c9c9c"/></svg>
<svg class="a" style="left:669px;top:561px;" width="16" height="13" viewBox="0 16 13"><rect x="0" y="0" width="5" height="4.5" fill="#7b6fb8"/><rect x="11" y="0" width="5" height="4.5" fill="#7b6fb8"/><rect x="5" y="8.5" width="5" height="4.5" fill="#7b6fb8"/><path d="M4 2H12V3H4Z" fill="#7b6fb8"/><path d="M2.5 4L7.5 9" stroke="#7b6fb8" stroke-width="1.2"/></svg>
<div class="a" style="left:689px;top:554px;width:500px;height:28px;background:#464646;border-radius:3px;border-bottom:1px solid #dcdcdc"></div>
<svg class="a" style="left:1173.5px;top:565.5px;" width="8" height="5" viewBox="0 8 5"><path d="M0 0H8L4 5Z" fill="#9c9c9c"/></svg>
<svg class="a" style="left:1195.9px;top:560.5px;" width="13" height="13" viewBox="0 13 13"><circle cx="6.5" cy="6.5" r="6.3" fill="#4c4d4f"/><rect x="5.75" y="3.1" width="1.6" height="1.6" fill="#1d1e20"/><path d="M5.2 5.6H7.3V8.8H7.9V9.9H5V8.8H5.7V6.6H5.2Z" fill="#1d1e20"/></svg>
<svg class="a" style="left:1215px;top:559.5px;" width="16" height="16" viewBox="0 16 16"><circle cx="8" cy="8" r="7.1" fill="#4a94de"/><rect x="6.7" y="4.1" width="2.6" height="7.8" fill="#1d1e20"/><rect x="4.1" y="6.7" width="7.8" height="2.6" fill="#1d1e20"/></svg>
<svg class="a" style="left:668.5px;top:590.5px;" width="20" height="16" viewBox="0 0 20 16"><rect x="10.4" y="0.5" width="8.6" height="11.5" rx="1" fill="#5ba8bc"/><circle cx="15.4" cy="12.2" r="3.4" fill="#5ba8bc"/><circle cx="15.4" cy="12.2" r="1.1" fill="#1d1e20"/><path d="M1 14.9L11.5 11.4" stroke="#5ba8bc" stroke-width="1.9" stroke-linecap="round"/><g transform="rotate(-15 5 7.5)"><rect x="1" y="3.6" width="8.2" height="7.2" fill="#5ba8bc"/><rect x="3.9" y="3.6" width="2.4" height="2.6" fill="#1d1e20"/></g></svg>
<div class="a" style="left:689px;top:586px;width:75px;height:28px;background:#464646;border-radius:3px;border-bottom:1px solid #dcdcdc"></div>
<svg class="a" style="left:751px;top:597px;" width="10" height="7" viewBox="0 10 7"><path d="M1 1L5 5L9 1" fill="none" stroke="#dcdcdc" stroke-width="2"/></svg>
<div class="a" style="left:774px;top:586px;width:206px;height:28px;background:#464646;border-radius:3px;border-bottom:1px solid #dcdcdc"></div>
<svg class="a" style="left:668.8px;top:623px;" width="12" height="15" viewBox="0 0 12 15"><path d="M1.4 .7H7.6L11.3 4.4V13.6Q11.3 14.3 10.6 14.3H1.4Q.7 14.3 .7 13.6V1.4Q.7 .7 1.4 .7Z" fill="none" stroke="#dcdcdc" stroke-width="1.3"/><path d="M7.4 .7L11.3 4.6H7.4Z" fill="#dcdcdc"/><path d="M5.6 4.6Q6.2 8.2 2.8 11.8M5.2 9.2Q7.4 9.4 9.4 10.6M3.4 11Q6 9.4 7.6 7.4" fill="none" stroke="#cfcfcf" stroke-width=".9"/></svg>
<div class="a" style="left:689px;top:618px;width:200px;height:28px;background:#464646;border-radius:3px;border-bottom:1px solid #dcdcdc"></div>
<div class="a" style="left:694px;top:622px;font-size:14.7px;line-height:20px;">sponge</div>
<svg class="a" style="left:873.5px;top:629.5px;" width="8" height="5" viewBox="0 8 5"><path d="M0 0H8L4 5Z" fill="#9c9c9c"/></svg>
<div class="a" style="left:669px;top:655px;width:1100px;height:55px;background:#464646;border:1px solid #b8b8b8;border-radius:3px"></div>
<div class="a" style="left:674px;top:661px;width:1px;height:15px;background:#dcdcdc"></div>
<div class="a" style="left:669px;top:725px;width:1100px;height:55px;background:#464646;border:1px solid #b8b8b8;border-radius:3px"></div>
<svg class="a" style="left:1760px;top:701px;" width="8" height="8" viewBox="0 8 8"><path d="M7 1L1 7M7 4L4 7" stroke="#bbbbbb" stroke-width="1"/></svg>
<svg class="a" style="left:1760px;top:771px;" width="8" height="8" viewBox="0 8 8"><path d="M7 1L1 7M7 4L4 7" stroke="#bbbbbb" stroke-width="1"/></svg>
<div class="a" style="left:247px;top:806px;width:1635px;height:1px;background:#a8a8a8"></div>
<div class="a" style="left:942px;top:840px;width:144px;height:35px;background:#ac8f57;border-radius:3px"></div>
<div class="a" style="left:1096px;top:840px;width:91px;height:35px;background:#ac8f57;border-radius:3px"></div>
<div class="a" style="left:957px;top:847px;font-size:14.6px;line-height:20px;font-weight:bold;color:#ffffff;">CREATE DRAFT</div>
<div class="a" style="left:1111px;top:847px;font-size:14.6px;line-height:20px;font-weight:bold;color:#ffffff;">CANCEL</div>
</div></body></html>
